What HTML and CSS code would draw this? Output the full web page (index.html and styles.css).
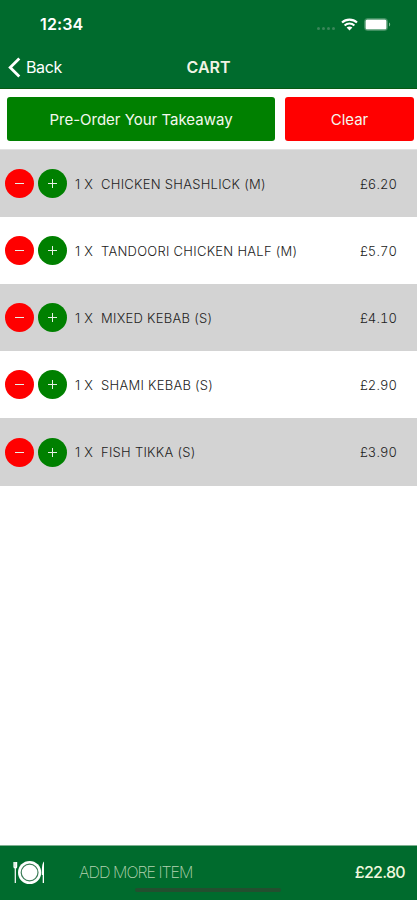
FILE: index.html
```html
<!DOCTYPE html>
<html lang="en">

	<head>
		<meta charset="UTF-8">
		<title>Cart</title>
		<link rel="stylesheet" href="styles.css">
	</head>

	<body>
		<div class="app">
			<header class="header">
				<div class="status">
					<span class="time">12:34</span>
					<span class="signal"><i></i><i></i><i></i><i></i></span>
					<svg class="wifi" width="17" height="13" viewBox="0 0 17 13">
						<path d="M1 4.6C5.2.6 11.8.6 16 4.6M3.6 7.4c2.8-2.6 7-2.6 9.8 0" fill="none" stroke="#fff" stroke-width="2.1" />
						<path d="M8.500 12.600L5.600 9.600C7.300 8.200 9.700 8.200 11.400 9.600z" fill="#fff" />
					</svg>
					<svg class="battery" width="27" height="13" viewBox="0 0 27 13">
						<rect x=".5" y=".5" width="23" height="12" rx="3" fill="none" stroke="#fff" stroke-opacity=".25" />
						<rect x="1.500" y="1.500" width="21" height="10" rx="1.500" fill="#fff" />
						<path d="M25 4.500c1.600.6 1.600 3.400 0 4z" fill="#fff" fill-opacity=".5" />
					</svg>
				</div>
				<div class="nav">
					<a class="back" href="#">
						<svg width="13" height="21" viewBox="0 0 13 21">
							<path d="M11.300 1.500L2.200 10.500l9.100 9" fill="none" stroke="#fff" stroke-width="2.800" />
						</svg>
						<span>Back</span>
					</a>
					<h1>CART</h1>
				</div>
			</header>

			<div class="actions">
				<button class="btn order"><span>Pre-Order Your Takeaway</span></button>
				<button class="btn clear"><span>Clear</span></button>
			</div>

			<ul class="list">
				<li>
					<button class="round minus"></button>
					<button class="round plus"></button>
					<span class="qty">1 X</span>
					<span class="name">CHICKEN SHASHLICK (M)</span>
					<span class="price">£6.20</span>
				</li>
				<li>
					<button class="round minus"></button>
					<button class="round plus"></button>
					<span class="qty">1 X</span>
					<span class="name">TANDOORI CHICKEN HALF (M)</span>
					<span class="price">£5.70</span>
				</li>
				<li>
					<button class="round minus"></button>
					<button class="round plus"></button>
					<span class="qty">1 X</span>
					<span class="name">MIXED KEBAB (S)</span>
					<span class="price">£4.10</span>
				</li>
				<li>
					<button class="round minus"></button>
					<button class="round plus"></button>
					<span class="qty">1 X</span>
					<span class="name">SHAMI KEBAB (S)</span>
					<span class="price">£2.90</span>
				</li>
				<li>
					<button class="round minus"></button>
					<button class="round plus"></button>
					<span class="qty">1 X</span>
					<span class="name">FISH TIKKA (S)</span>
					<span class="price">£3.90</span>
				</li>
			</ul>

			<footer class="footer">
				<svg class="plate" width="32" height="25" viewBox="0 0 32 25">
					<circle cx="16.600" cy="12.500" r="11.600" fill="#fff" />
					<circle cx="16.600" cy="12.500" r="8.400" fill="none" stroke="#3c7d58" stroke-width="1.200" />
					<path d="M1 2v5q0 1 1.300 1t1.300-1V2M2.300 2V23" fill="none" stroke="#fff" stroke-width="1.200" />
					<path d="M31 1.500V23h-1.300v-8h-.9C28.800 9 29 3 31 1.500z" fill="#fff" />
				</svg>
				<span class="more">ADD MORE ITEM</span>
				<span class="total">£22.80</span>
				<div class="home"></div>
			</footer>
		</div>
	</body>

</html>
```
FILE: styles.css
```css
* { margin:0; padding:0; box-sizing:border-box; }
li { list-style:none; }
a { text-decoration:none; color:inherit; }
button { border:0; font:inherit; color:inherit; }
body { font-family:Inter, "Liberation Sans", sans-serif; background:#fff; color:#222; }
.app { width:417px; height:900px; display:flex; flex-direction:column; overflow:hidden; }

.header { height:89px; background:#006b2d; border-bottom:1px solid #075a12; color:#fff; }
.status { height:48px; padding:0 26px 0 40px; display:flex; align-items:center; }
.time { flex:1; font-size:16px; font-weight:600; letter-spacing:.15px; }
.signal { display:flex; gap:2px; padding-top:9px; margin-right:6px; }
.signal i { width:3px; height:3px; border-radius:50%; background:#3a8659; }
.wifi { margin-right:6px; }
.nav { height:38px; display:grid; grid-template-columns:1fr auto 1fr; align-items:center; }
.back { display:flex; align-items:center; gap:5px; padding-left:8px; font-size:16px; letter-spacing:-.4px; }
.nav h1 { font-size:16px; font-weight:600; color:#f1f3e4; }

.actions { height:61px; padding:8px 3px 9px 7px; display:flex; gap:10px; border-bottom:1px solid #e2e2e2; }
.btn { height:44px; border-radius:3px; font-size:15px; color:#f4f8ee; }
.order { width:268px; background:#008000; }
.clear { width:129px; background:#f00; }

.list li { height:67px; padding:0 20px 0 5px; display:flex; align-items:center; font-size:13px; font-weight:300; }
.list li:nth-child(odd) { background:#d3d3d3; }
.list li:last-child { height:68px; }
.round { width:29px; height:29px; margin-right:4px; border-radius:50%; display:grid; place-items:center; }
.minus { background:#f00; }
.plus { background:#008000; }
.round::before, .plus::after { content:""; grid-area:1/1; width:9px; height:1px; background:#e8f0e8; }
.plus::after { width:1px; height:9px; }
.qty { width:26px; margin-left:4px; letter-spacing:.3px; }
.name { flex:1; letter-spacing:.27px; }
.price { letter-spacing:.1px; font-feature-settings:"tnum"; }

.footer { position:relative; height:55px; margin-top:auto; padding:0 12px 2px 13px; display:flex; align-items:center; background:#006b2d; border-top:1px solid #7fb092; }
.more { flex:1; margin-left:34px; font-size:16px; font-weight:200; letter-spacing:-.98px; color:#b5d3b1; }
.total { font-size:16px; font-weight:500; letter-spacing:-.7px; color:#f0f8df; }
.home { position:absolute; left:135px; bottom:8px; width:146px; height:4px; border-radius:2px; background:#234f2f; }
```
